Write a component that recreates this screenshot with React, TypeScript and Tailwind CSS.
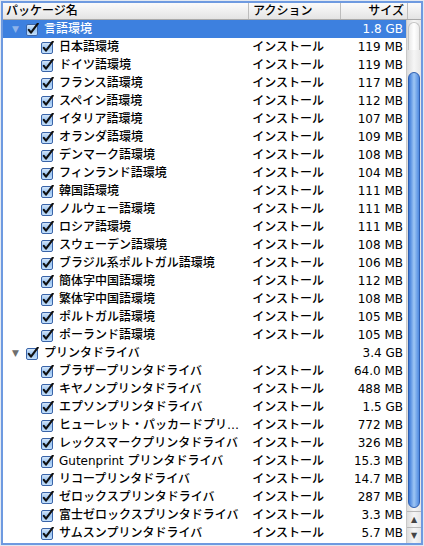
import React from 'react';

type Row = { name: string; action?: string; size: string; group?: boolean; selected?: boolean };

const rows: Row[] = [
  { name: '言語環境', size: '1.8 GB', group: true, selected: true },
  { name: '日本語環境', action: 'インストール', size: '119 MB' },
  { name: 'ドイツ語環境', action: 'インストール', size: '119 MB' },
  { name: 'フランス語環境', action: 'インストール', size: '117 MB' },
  { name: 'スペイン語環境', action: 'インストール', size: '112 MB' },
  { name: 'イタリア語環境', action: 'インストール', size: '107 MB' },
  { name: 'オランダ語環境', action: 'インストール', size: '109 MB' },
  { name: 'デンマーク語環境', action: 'インストール', size: '108 MB' },
  { name: 'フィンランド語環境', action: 'インストール', size: '104 MB' },
  { name: '韓国語環境', action: 'インストール', size: '111 MB' },
  { name: 'ノルウェー語環境', action: 'インストール', size: '111 MB' },
  { name: 'ロシア語環境', action: 'インストール', size: '111 MB' },
  { name: 'スウェーデン語環境', action: 'インストール', size: '108 MB' },
  { name: 'ブラジル系ポルトガル語環境', action: 'インストール', size: '106 MB' },
  { name: '簡体字中国語環境', action: 'インストール', size: '112 MB' },
  { name: '繁体字中国語環境', action: 'インストール', size: '108 MB' },
  { name: 'ポルトガル語環境', action: 'インストール', size: '105 MB' },
  { name: 'ポーランド語環境', action: 'インストール', size: '105 MB' },
  { name: 'プリンタドライバ', size: '3.4 GB', group: true },
  { name: 'ブラザープリンタドライバ', action: 'インストール', size: '64.0 MB' },
  { name: 'キヤノンプリンタドライバ', action: 'インストール', size: '488 MB' },
  { name: 'エプソンプリンタドライバ', action: 'インストール', size: '1.5 GB' },
  { name: 'ヒューレット・パッカードプリ…', action: 'インストール', size: '772 MB' },
  { name: 'レックスマークプリンタドライバ', action: 'インストール', size: '326 MB' },
  { name: 'Gutenprint プリンタドライバ', action: 'インストール', size: '15.3 MB' },
  { name: 'リコープリンタドライバ', action: 'インストール', size: '14.7 MB' },
  { name: 'ゼロックスプリンタドライバ', action: 'インストール', size: '287 MB' },
  { name: '富士ゼロックスプリンタドライバ', action: 'インストール', size: '3.3 MB' },
  { name: 'サムスンプリンタドライバ', action: 'インストール', size: '5.7 MB' },
];

const font = "font-['DejaVu_Sans','Noto_Sans_CJK_JP',sans-serif]";

export default function App() {
  return (
    <div className={`h-[546px] w-[424px] overflow-hidden bg-[#e3e9f2] p-px ${font}`}>
      <div className="flex h-full flex-col border-2 border-[#6e9ae0] bg-white">
        <Header />
        <div className="flex min-h-0 flex-1">
          <div className="flex-1 overflow-hidden">
            {rows.map((r) => (
              <TreeRow key={r.name} row={r} />
            ))}
          </div>
          <Scrollbar />
        </div>
      </div>
    </div>
  );
}

function Header() {
  return (
    <div className="flex h-[17px] shrink-0 border-b border-[#a9a9a9] bg-gradient-to-b from-[#fbfbfb] to-[#e4e4e4] text-[12px] leading-[17px] font-medium text-black">
      <div className="w-[246px] border-r border-[#bdbdbd] pl-[3px]">パッケージ名</div>
      <div className="w-[92px] border-r border-[#bdbdbd] pl-[4px]">アクション</div>
      <div className="w-[67px] border-r border-[#bdbdbd] pr-[3px] text-right">サイズ</div>
      <div className="flex-1" />
    </div>
  );
}

function TreeRow({ row }: { row: Row }) {
  const sel = row.selected;
  return (
    <div
      className={`flex h-[18px] items-center text-[12px] leading-[18px] font-medium ${
        sel ? 'bg-[#3d80df] text-white' : 'text-black'
      }`}
    >
      <div className="flex w-[246px] items-center overflow-hidden whitespace-nowrap">
        {row.group ? (
          <>
            <span className={`ml-[9px] w-[11px] text-[9px] ${sel ? 'text-[#8fb4ea]' : 'text-[#6f6f6f]'}`}>▼</span>
            <CheckBox className="ml-[3px]" />
            <span className="ml-[5px]">{row.name}</span>
          </>
        ) : (
          <>
            <CheckBox className="ml-[38px]" />
            <span className="ml-[5px]">{row.name}</span>
          </>
        )}
      </div>
      <div className="w-[93px] pl-[5px]">{row.action ?? ''}</div>
      <div className="w-[67px] pr-[3px] text-right">{row.size}</div>
    </div>
  );
}

function CheckBox({ className = '' }: { className?: string }) {
  return (
    <svg width="13" height="13" viewBox="0 0 13 13" className={`shrink-0 ${className}`}>
      <defs>
        <linearGradient id="cb" x1="0" y1="0" x2="0" y2="1">
          <stop offset="0" stopColor="#d8e9fb" />
          <stop offset="0.5" stopColor="#9cc5f2" />
          <stop offset="1" stopColor="#c9e3fb" />
        </linearGradient>
      </defs>
      <rect x="0.5" y="1.5" width="11" height="11" rx="1.5" fill="url(#cb)" stroke="#3a64a8" />
      <path d="M2.8 6.8 L5 9.6 L11.8 0.6" fill="none" stroke="#111" strokeWidth="2.1" strokeLinecap="round" strokeLinejoin="round" />
    </svg>
  );
}

function Scrollbar() {
  return (
    <div className="flex w-[15px] shrink-0 flex-col border-l border-[#c9c9c9] bg-gradient-to-r from-[#dcdcdc] via-[#f6f6f6] to-[#e6e6e6]">
      <div className="flex-1 px-[1px]">
        <div className="mt-[2px] h-[28px] rounded-t-full border-x border-t border-[#c4c4c4] bg-gradient-to-r from-[#e9e9e9] via-[#ffffff] to-[#ececec]" />
        <div className="mt-[22px] h-[436px] rounded-full border border-[#2f5fb0] bg-gradient-to-r from-[#3a78d8] via-[#9ec6f4] to-[#4f8ae0]" />
      </div>
      <div className="flex h-[16px] items-center justify-center border-t border-[#b8b8b8] text-[8px] text-[#444]">▲</div>
      <div className="flex h-[16px] items-center justify-center border-t border-[#b8b8b8] text-[8px] text-[#444]">▼</div>
    </div>
  );
}
